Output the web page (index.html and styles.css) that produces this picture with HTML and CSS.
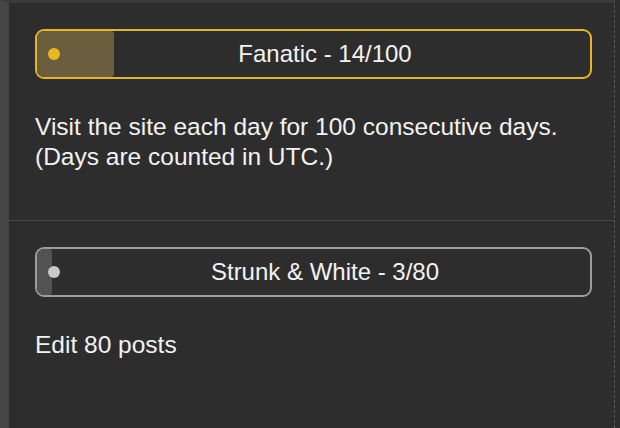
FILE: index.html
```html
<!DOCTYPE html>
<html>
<head>
<meta charset="utf-8">
<link rel="stylesheet" href="styles.css">
</head>
<body>
<div class="panel">
  <section class="badge">
    <div class="bar bar-gold">
      <div class="fill" style="width: 14%"></div>
      <span class="dot"></span>
      <span class="label">Fanatic - 14/100</span>
    </div>
    <p class="desc">Visit the site each day for 100 consecutive days.<br>(Days are counted in UTC.)</p>
  </section>
  <section class="badge">
    <div class="bar bar-silver">
      <div class="fill" style="width: 2.7%"></div>
      <span class="dot"></span>
      <span class="label">Strunk &amp; White - 3/80</span>
    </div>
    <p class="desc">Edit 80 posts</p>
  </section>
</div>
</body>
</html>
```
FILE: styles.css
```css
html, body {
  margin: 0;
  padding: 0;
  background: #2d2d2d;
  height: 100%;
}
body {
  font-family: "Liberation Sans", Arial, sans-serif;
  color: #f2f2f2;
  overflow: hidden;
}
.panel {
  box-sizing: border-box;
  min-height: 100%;
  margin-right: 5px;
  border-left: 9px solid #454545;
  border-top: 3px solid #3b3b3b;
  border-right: 1px dashed #5a5a5a;
  background: #2d2d2d;
}
.badge {
  padding: 26px 22px 48px 26px;
}
.badge + .badge {
  border-top: 1px solid #474747;
}
.bar {
  position: relative;
  box-sizing: border-box;
  height: 50px;
  border: 2px solid;
  border-radius: 9px;
  display: flex;
  align-items: center;
  padding-left: 11px;
  overflow: hidden;
}
.bar-gold { border-color: #e6b524; }
.bar-silver { border-color: #9c9c9c; }
.fill {
  position: absolute;
  left: 0;
  top: 0;
  bottom: 0;
  border-radius: 6px 3px 3px 6px;
}
.bar-gold .fill { background: #6a5e3f; }
.bar-silver .fill { background: #525252; }
.dot {
  position: relative;
  width: 12px;
  height: 12px;
  border-radius: 50%;
  flex: none;
}
.bar-gold .dot { background: #e8b923; }
.bar-silver .dot { background: #c8c8c8; }
.label {
  position: relative;
  flex: 1;
  text-align: center;
  font-size: 24px;
  line-height: 1;
  color: #f2f2f2;
}
.desc {
  margin: 33px 0 0;
  font-size: 24.5px;
  line-height: 30px;
}
```
